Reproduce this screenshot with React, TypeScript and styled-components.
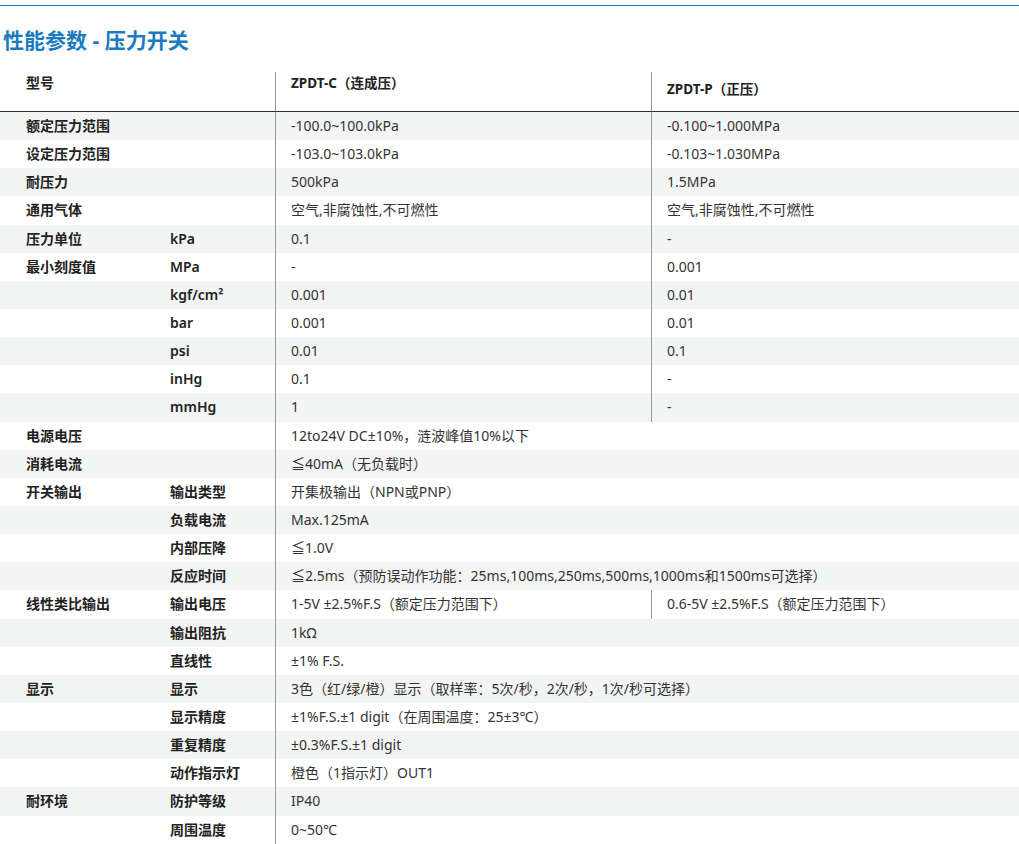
import styled, { createGlobalStyle } from "styled-components";

const Global = createGlobalStyle`
  body {
    margin: 0;
    background: #fff;
    font-family: "Noto Sans", "Noto Sans CJK SC", sans-serif;
    color: #222;
  }
`;

const Page = styled.div`
  width: 1019px;
  padding-top: 5px;
`;

const TopLine = styled.div`
  height: 1px;
  background: #1a7bc0;
`;

const Title = styled.h1`
  margin: 0;
  padding: 21px 0 0 3px;
  height: 66px;
  box-sizing: border-box;
  font-size: 21px;
  font-weight: 700;
  color: #1a7bc0;
  line-height: 26px;
`;

const Row = styled.div<{ $shade?: boolean; $head?: boolean }>`
  display: grid;
  grid-template-columns: 170px 105px 376px 1fr;
  height: ${(p) => (p.$head ? "40px" : "28.15px")};
  background: ${(p) => (p.$shade ? "#f3f4f4" : "#fff")};
  border-bottom: ${(p) => (p.$head ? "1.5px solid #333" : "none")};
  font-size: 14px;
  line-height: 28px;
  box-sizing: border-box;
`;

const Label = styled.div<{ $head?: boolean }>`
  padding-left: 26px;
  font-weight: 600;
  line-height: ${(p) => (p.$head ? "18px" : "28px")};
  padding-top: ${(p) => (p.$head ? "2px" : "0")};
`;

const Sub = styled.div`
  font-weight: 600;
`;

const Val = styled.div<{ $line?: boolean }>`
  border-left: ${(p) => (p.$line ? "1px solid #999" : "none")};
  padding-left: 15px;
  white-space: nowrap;
  color: #333;
`;

const HeadVal = styled.div<{ $top: number }>`
  border-left: 1px solid #999;
  padding: ${(p) => p.$top}px 0 0 15px;
  line-height: 18px;
  font-weight: 700;
  font-size: 13.5px;
`;

type R = [string, string, string, string?];

const rows: R[] = [
  ["额定压力范围", "", "-100.0~100.0kPa", "-0.100~1.000MPa"],
  ["设定压力范围", "", "-103.0~103.0kPa", "-0.103~1.030MPa"],
  ["耐压力", "", "500kPa", "1.5MPa"],
  ["通用气体", "", "空气,非腐蚀性,不可燃性", "空气,非腐蚀性,不可燃性"],
  ["压力单位", "kPa", "0.1", "-"],
  ["最小刻度值", "MPa", "-", "0.001"],
  ["", "kgf/cm²", "0.001", "0.01"],
  ["", "bar", "0.001", "0.01"],
  ["", "psi", "0.01", "0.1"],
  ["", "inHg", "0.1", "-"],
  ["", "mmHg", "1", "-"],
  ["电源电压", "", "12to24V DC±10%，涟波峰值10%以下"],
  ["消耗电流", "", "≦40mA（无负载时）"],
  ["开关输出", "输出类型", "开集极输出（NPN或PNP）"],
  ["", "负载电流", "Max.125mA"],
  ["", "内部压降", "≦1.0V"],
  ["", "反应时间", "≦2.5ms（预防误动作功能：25ms,100ms,250ms,500ms,1000ms和1500ms可选择）"],
  ["线性类比输出", "输出电压", "1-5V  ±2.5%F.S（额定压力范围下）", "0.6-5V  ±2.5%F.S（额定压力范围下）"],
  ["", "输出阻抗", "1kΩ"],
  ["", "直线性", "±1% F.S."],
  ["显示", "显示", "3色（红/绿/橙）显示（取样率：5次/秒，2次/秒，1次/秒可选择）"],
  ["", "显示精度", "±1%F.S.±1 digit（在周围温度：25±3℃）"],
  ["", "重复精度", "±0.3%F.S.±1 digit"],
  ["", "动作指示灯", "橙色（1指示灯）OUT1"],
  ["耐环境", "防护等级", "IP40"],
  ["", "周围温度", "0~50℃"],
];

export default function App() {
  return (
    <Page>
      <Global />
      <TopLine />
      <Title>性能参数 - 压力开关</Title>
      <Row $head>
        <Label $head>型号</Label>
        <Sub />
        <HeadVal $top={2}>ZPDT-C（连成压）</HeadVal>
        <HeadVal $top={8}>ZPDT-P（正压）</HeadVal>
      </Row>
      {rows.map(([a, b, c, d], i) => (
        <Row key={i} $shade={i % 2 === 0}>
          <Label>{a}</Label>
          <Sub>{b}</Sub>
          <Val $line>{c}</Val>
          {d !== undefined ? <Val $line>{d}</Val> : null}
        </Row>
      ))}
    </Page>
  );
}
